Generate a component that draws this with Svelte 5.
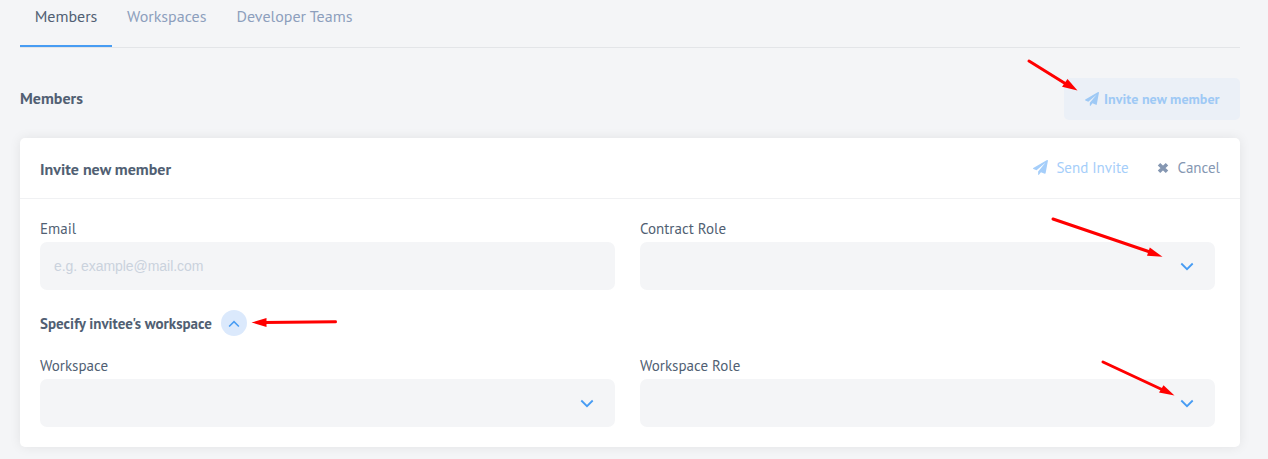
<script>
  let activeTab = $state('Members');
  let open = $state(true);
  const tabs = [
    { name: 'Members', width: 92 },
    { name: 'Workspaces', width: 109.5 },
    { name: 'Developer Teams', width: 146 }
  ];
</script>

{#snippet plane()}
  <svg class="plane" viewBox="0 0 512 512" aria-hidden="true"><path fill="currentColor" d="M480 3 10 274c-14 9-12 29 3 35L121 354l303-258L176 389v108c0 15 18 20 27 9l68-91 132 55c12 5 25-2 27-15L510 25c2-18-15-30-30-22z" /></svg>
{/snippet}

{#snippet chevron()}
  <svg class="chevron" viewBox="0 0 14 9" aria-hidden="true"><path d="M1.300 1.500 7 7.200l5.700-5.700" fill="none" stroke="currentColor" stroke-width="1.800" /></svg>
{/snippet}

{#snippet selectField(label)}
  <div class="field">
    <span class="label">{label}</span>
    <button class="control select" aria-label={label}>{@render chevron()}</button>
  </div>
{/snippet}

<main>
  <nav>
    {#each tabs as tab}
      <button class="tab" class:active={activeTab === tab.name} style="width: {tab.width}px" onclick={() => (activeTab = tab.name)}>{tab.name}</button>
    {/each}
  </nav>

  <header class="section">
    <h1>Members</h1>
    <button class="invite">{@render plane()}<span>Invite new member</span></button>
  </header>

  <section class="card">
    <header class="card-head">
      <h2>Invite new member</h2>
      <div class="actions">
        <button class="send">{@render plane()}<span>Send Invite</span></button>
        <button class="cancel">
          <svg viewBox="0 0 12 12" aria-hidden="true"><path d="M2 2.200 10 9.800M10 2.200 2 9.800" stroke="currentColor" stroke-width="3.600" /></svg>
          <span>Cancel</span>
        </button>
      </div>
    </header>
    <div class="body">
      <div class="row">
        <label class="field">
          <span class="label">Email</span>
          <input class="control" type="email" placeholder="e.g. example@mail.com" />
        </label>
        {@render selectField('Contract Role')}
      </div>
      <div class="specify">
        <h3>Specify invitee's workspace</h3>
        <button class="toggle" class:open aria-label="Toggle workspace" onclick={() => (open = !open)}>{@render chevron()}</button>
      </div>
      {#if open}
        <div class="row">
          {@render selectField('Workspace')}
          {@render selectField('Workspace Role')}
        </div>
      {/if}
    </div>
  </section>

  <svg class="arrows" viewBox="0 0 1268 459" aria-hidden="true">
    <g stroke="#f00" stroke-width="3" stroke-linecap="round">
      <path d="M1029 61 1066 84" />
      <path d="M1053 219 1150 252" />
      <path d="M335.500 321.700 264 322.500" />
      <path d="M1103 362 1163 390" />
    </g>
    <g fill="#f00">
      <path d="M1077.500 90.500 1062 86.800 1067.500 79Z" />
      <path d="M1162.500 256.800 1147 255.700 1149.800 247.500Z" />
      <path d="M251.500 322.500 266.500 318 266.500 327Z" />
      <path d="M1174.500 395.500 1159 392.500 1163.500 385.300Z" />
    </g>
  </svg>
</main>

<style>
  :global(body) { margin: 0; background: #f4f5f7; }
  main, button { font-family: 'PT Sans', 'Open Sans', 'Noto Sans', sans-serif; font-stretch: 87%; }
  main { position: relative; box-sizing: border-box; height: 459px; padding: 0 28px 0 20px; overflow: hidden; color: #515f73; font-size: 16px; }
  button { border: 0; padding: 0; margin: 0; background: none; color: inherit; font-size: 16px; cursor: pointer; white-space: nowrap; }
  h1, h2, h3 { margin: 0; font-size: 16px; font-weight: 700; white-space: nowrap; }
  h1, .actions { margin-bottom: 2px; }
  svg { display: block; flex: none; }
  nav { display: flex; height: 47px; border-bottom: 1px solid #e3e5e8; }
  .tab { box-sizing: border-box; height: 47px; padding: 0 0 14px; border-bottom: 2px solid transparent; color: #8d9fbd; }
  .tab.active { border-color: #479cf3; color: #515f73; }
  .section { display: flex; justify-content: space-between; align-items: center; height: 42px; margin: 30px 0 18px; }
  .invite { display: flex; align-items: center; gap: 5px; box-sizing: border-box; width: 176px; height: 42px; padding-left: 21px; border-radius: 5px; background: #ebf0f7; color: #9ec9f5; font-size: 14px; font-weight: 700; letter-spacing: .05px; }
  .plane { width: 14px; height: 14px; }
  .card { height: 309px; border-radius: 5px; background: #fff; box-shadow: 0 0 12px rgba(0, 0, 0, .08); }
  .card-head { display: flex; justify-content: space-between; align-items: center; box-sizing: border-box; height: 61px; padding: 0 20px; border-bottom: 1px solid #f0f1f3; }
  h2 { margin-top: 1px; }
  .actions { display: flex; gap: 28px; }
  .send, .cancel { display: flex; align-items: center; gap: 8px; color: #a5cefa; font-size: 15px; }
  .send .plane { width: 15px; height: 15px; }
  .cancel { color: #8597b2; }
  .cancel svg { width: 12px; height: 12px; margin: 1px 1px 0 0; }
  .body { padding: 20px 25px 20px 20px; }
  .row { display: grid; grid-template-columns: 1fr 1fr; gap: 25px; }
  .field { display: flex; flex-direction: column; min-width: 0; }
  .label { height: 23px; line-height: 20px; font-size: 15px; }
  .control { box-sizing: border-box; width: 100%; height: 48px; padding: 0 14px; border: 0; border-radius: 7px; background: #f4f5f7; font: 14px 'Liberation Sans', Arial, sans-serif; letter-spacing: -.05px; }
  .control::placeholder { color: #cad2dd; opacity: 1; }
  .select { display: flex; justify-content: flex-end; align-items: center; padding: 1px 21px 0 0; color: #479cf3; }
  .chevron { width: 14px; height: 9px; }
  .specify { display: flex; align-items: center; gap: 9px; height: 26px; margin: 20px 0; }
  h3 { font-size: 15px; }
  .toggle { display: grid; place-items: center; box-sizing: border-box; width: 26px; height: 26px; padding-top: 2px; border-radius: 50%; background: #dbe9fc; color: #479cf3; }
  .toggle .chevron { width: 12px; height: 8px; }
  .open .chevron { transform: rotate(180deg); }
  .arrows { position: absolute; inset: 0; width: 1268px; height: 459px; pointer-events: none; }
</style>
